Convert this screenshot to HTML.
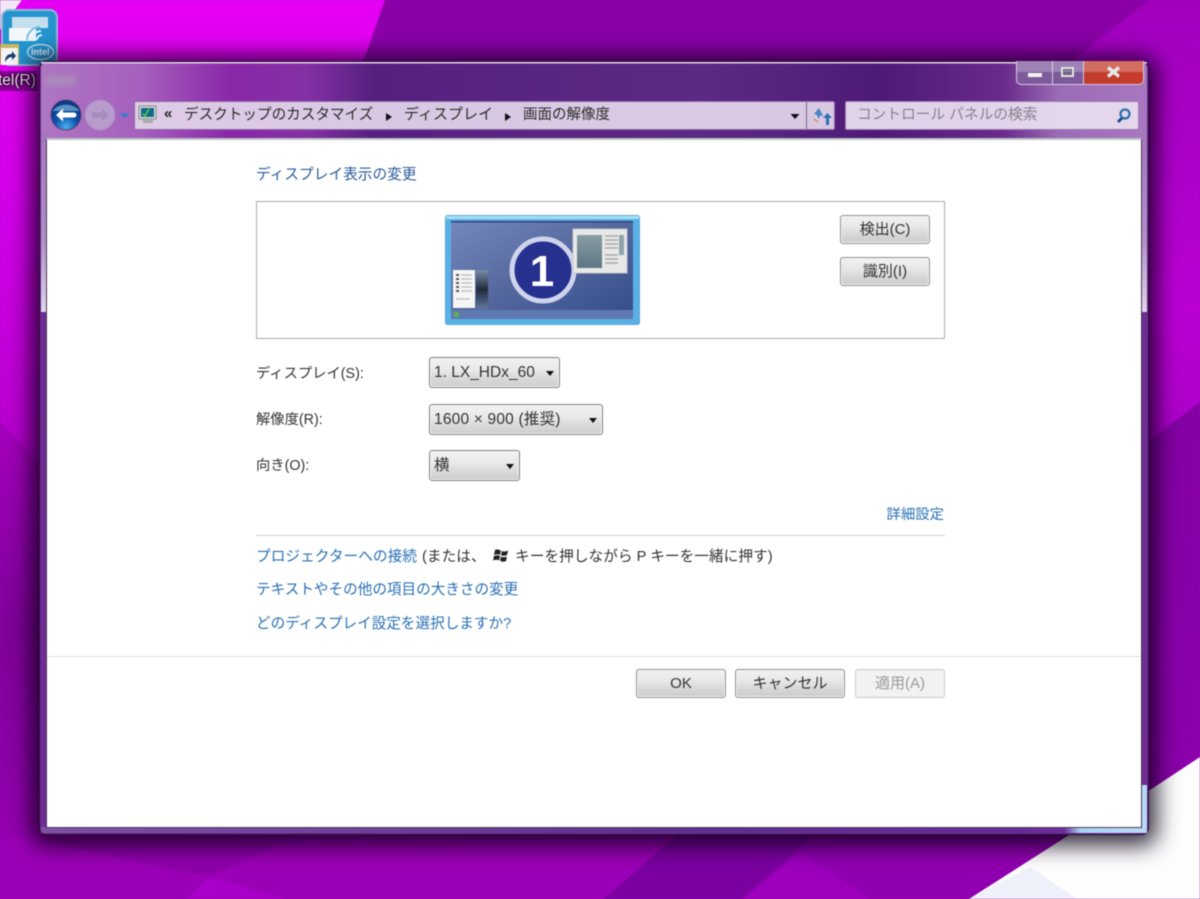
<!DOCTYPE html>
<html lang="ja"><head><meta charset="utf-8"><title>画面の解像度</title>
<style>
*{box-sizing:border-box}
html{background:#a000c0}
html,body{margin:0;padding:0;width:1200px;height:899px;overflow:hidden}
body{position:relative;font-family:"Liberation Sans","Noto Sans CJK JP",sans-serif;font-size:14px;color:#333;filter:blur(.4px)}
.a{position:absolute;white-space:nowrap}
.link{color:#2a70b4}
.btn{position:absolute;height:29px;border:1px solid #8f8f8f;border-radius:3px;background:linear-gradient(#f2f2f2 0,#e6e6e6 45%,#dcdcdc 60%,#cacaca 100%);box-shadow:inset 0 0 0 1px #f4f4f4;text-align:center;line-height:27px;color:#333;font-size:15px}
.sel{position:absolute;height:31px;border:1px solid #808080;border-radius:3px;background:linear-gradient(#f2f2f2 0,#e8e8e8 45%,#dedede 60%,#cdcdcd 100%);box-shadow:inset 0 0 0 1px #f4f4f4;line-height:29px;padding-left:4px;color:#333;font-size:15.500px;letter-spacing:.2px;white-space:nowrap}
.sel:after{content:"";position:absolute;right:5px;top:13px;border:4px solid transparent;border-top:5px solid #111;border-bottom:0}
.lab{position:absolute;white-space:nowrap;left:256px;font-size:14.300px;color:#333;line-height:20px}
</style></head><body>
<svg class="a" style="left:0;top:0" width="1200" height="899" viewBox="0 0 1200 899">
<defs>
<linearGradient id="l1" x1="0" y1="0" x2="0" y2="1"><stop offset="0" stop-color="#e600f4"/><stop offset=".5" stop-color="#d000e6"/><stop offset="1" stop-color="#b400cc"/></linearGradient>
<linearGradient id="l2" x1="0" y1="0" x2="0" y2="1"><stop offset="0" stop-color="#a400bc"/><stop offset=".5" stop-color="#7e0098"/><stop offset="1" stop-color="#9400b0"/></linearGradient>
<linearGradient id="r1" x1="0" y1="0" x2="0" y2="1"><stop offset="0" stop-color="#a000be"/><stop offset=".7" stop-color="#ba00d4"/><stop offset="1" stop-color="#ac00c8"/></linearGradient>
<linearGradient id="r2" x1="0" y1="0" x2="0" y2="1"><stop offset="0" stop-color="#8400a4"/><stop offset="1" stop-color="#8c00ac"/></linearGradient>
</defs>
<rect width="1200" height="899" fill="#9c00b8"/>
<polygon points="0,0 22,0 0,30" fill="#f4e8f8"/>
<polygon points="0,30 22,0 390,0 345,100 40,100 40,462 0,422" fill="url(#l1)"/>
<polygon points="0,422 40,462 40,840 0,840" fill="url(#l2)"/>
<polygon points="385,0 1150,0 1060,70 350,100" fill="#8a00a6"/>
<polygon points="1150,0 1200,0 1200,402 1150,440 1150,60 1060,70" fill="url(#r1)"/>
<polygon points="1150,440 1200,402 1200,757 1150,790" fill="url(#r2)"/>
<polygon points="0,840 40,835 680,835 604,899 0,899" fill="#9a00b6"/>
<polygon points="40,840 300,835 208,877" fill="#8e00aa"/>
<polygon points="208,877 188,899 285,899" fill="#a800c8"/>
<polygon points="677,835 815,835 742,899 604,899" fill="#7a00a0"/>
<polygon points="815,835 1069,835 969,899 742,899" fill="#9000b0"/>
<polygon points="800,853 870,899 742,899" fill="#9c00bc"/>
<polygon points="1069,835 1150,790 1200,757 1200,899 969,899" fill="#fdfdfe"/>
<polygon points="1030,867 1077,899 969,899" fill="#eef0fa"/>
</svg>
<!-- desktop icon -->
<div class="a" style="left:1px;top:9px;width:57px;height:57px;border-radius:8px;border:2px solid #8eb8d6;background:#2595cf"></div>
<svg class="a" style="left:0;top:10px" width="58" height="56">
<rect x="12" y="7" width="36" height="11" fill="#c6dfee"/><rect x="9" y="18" width="27" height="13" fill="#f4f8fa"/>
<path d="M27 30a13 13 0 0 1 13-13" stroke="#7cc0e2" stroke-width="2" fill="none"/>
<path d="M32 30a9 9 0 0 1 9-9M37 30a5 5 0 0 1 5-5" stroke="#e2f2fa" stroke-width="2" fill="none"/>
<ellipse cx="40.500" cy="42" rx="13" ry="7.500" fill="none" stroke="#cbe8f6" stroke-width="1.200"/>
<text x="31" y="45" font-size="9" font-family="Liberation Sans" font-weight="bold" fill="#eaf6fc">intel</text>
<rect x="0" y="34" width="19" height="21" fill="#c9b860"/>
<rect x="1" y="38" width="17" height="17" fill="#f4f4f4"/>
<path d="M5 52c0-5 2-8 7-8v-3l4 5-4 4v-3c-3 0-5 2-7 5z" fill="#123a70"/>
</svg>
<div class="a" style="left:-3px;top:71px;font-size:15.500px;color:#f4e8f4;text-shadow:0 0 3px #000,0 0 2px #000;background:rgba(60,0,70,.5);height:20px;line-height:20px;padding:0 1px">tel(R)</div>
<!-- window -->
<div class="a" style="left:39px;top:61px;width:1110px;height:774px;border-radius:7px;border:1px solid #2a1036;box-shadow:0 3px 22px 8px rgba(10,0,20,.8);background:#6e2c94"></div>
<svg class="a" style="left:40px;top:62px" width="1108" height="772" viewBox="0 0 1108 772">
<defs>
<linearGradient id="tb" x1="0" x2="1"><stop offset="0" stop-color="#ae76c2"/><stop offset=".09" stop-color="#a660be"/><stop offset=".17" stop-color="#8a28a8"/><stop offset=".24" stop-color="#8430a4"/><stop offset=".3" stop-color="#562080"/><stop offset=".6" stop-color="#5c2a84"/><stop offset=".76" stop-color="#4e1a78"/><stop offset=".87" stop-color="#6a2a8c"/><stop offset=".92" stop-color="#9a6cb4"/><stop offset="1" stop-color="#a877c0"/></linearGradient>
<linearGradient id="bot" x1="0" x2="1"><stop offset="0" stop-color="#8050a4"/><stop offset=".6" stop-color="#5e2e90"/><stop offset=".925" stop-color="#6a2c9a"/><stop offset=".94" stop-color="#a8d4f4"/><stop offset="1" stop-color="#b8dcf6"/></linearGradient>
<linearGradient id="sd" x1="0" y1="0" x2="0" y2="1"><stop offset="0" stop-color="#a575be"/><stop offset=".6" stop-color="#b090c8"/><stop offset="1" stop-color="#e0d6ea"/></linearGradient>
</defs>
<rect x="1" y="0" width="1106" height="76" rx="6" fill="url(#tb)"/>
<rect x="1" y="0" width="1106" height="1.500" fill="#e4d4ec"/>
<rect x="1" y="765" width="1106" height="6" fill="url(#bot)"/>
<rect x="1" y="70" width="6" height="180" fill="url(#sd)"/><rect x="1101" y="70" width="6" height="180" fill="url(#sd)"/>
<rect x="1101" y="723" width="6" height="45" fill="#b4daf4"/>
</svg>
<!-- blurred label behind glass -->
<div class="a" style="left:46px;top:76px;width:30px;height:10px;background:rgba(170,170,180,.45);filter:blur(3px)"></div>
<!-- content -->
<div class="a" style="left:46px;top:138px;width:1096px;height:690px;background:#fff;border:1px solid #4a3a58;border-top:2px solid #bcc4c4"></div>
<div class="a" style="left:47px;top:656px;width:1094px;height:1px;background:#dcdcdc"></div>
<!-- window buttons -->
<div class="a" style="left:1016px;top:61px;width:128px;height:24px;border:1px solid #d8c8e0;border-top:0;border-radius:0 0 5px 5px;background:linear-gradient(90deg,#7c5a9c 0,#7c5a9c 66px,#c03c2c 67px,#c83c2c 127px);overflow:hidden">
<div style="position:absolute;left:0;right:0;top:0;height:11px;background:rgba(255,255,255,.25)"></div>
<div style="position:absolute;left:35px;top:0;width:1px;height:24px;background:#d8cce0"></div>
<div style="position:absolute;left:66px;top:0;width:1px;height:24px;background:#d8cce0"></div>
<div style="position:absolute;left:11px;top:12px;width:14px;height:4px;background:#f4f4f4"></div>
<div style="position:absolute;left:44px;top:6px;width:13px;height:10px;border:2px solid #e4e4e4;box-shadow:inset 0 0 0 1px #666"></div>
</div>
<svg class="a" style="left:1101px;top:63px" width="24" height="18"><path d="M7 4.500l11 9M18 4.500l-11 9" stroke="#e8e8e8" stroke-width="3.400" fill="none"/></svg>
<!-- nav buttons -->
<svg class="a" style="left:48px;top:98px" width="88" height="36">
<defs>
<radialGradient id="blue" cx=".5" cy=".9" r=".8"><stop offset="0" stop-color="#4ab0f0"/><stop offset=".5" stop-color="#0a4ea8"/><stop offset="1" stop-color="#0a3a84"/></radialGradient>
</defs>
<circle cx="18" cy="17" r="15" fill="url(#blue)" stroke="#5c4474"/>
<path d="M5 13a14 10 0 0 1 26 0z" fill="#7ab0dc" opacity=".7"/>
<path d="M8 17l7-6.500v4h11a2 2 0 0 1 0 5H15v4z" fill="#fff"/>
<circle cx="52" cy="17" r="15" fill="#b89ccc" stroke="#a888c0"/>
<path d="M44 14.500h10v-4l7 6.500-7 6.500v-4H44z" fill="#a58cbe"/>
<path d="M71 15.500h11l-5.500 4.500z" fill="#3080c8"/>
</svg>
<!-- address bar -->
<div class="a" style="left:134px;top:101px;width:701px;height:29px;background:rgba(224,210,232,.95);border:1px solid #8d6ca6;border-radius:2px"></div>
<div class="a" style="left:806px;top:102px;width:1px;height:27px;background:#7b6a88"></div>
<svg class="a" style="left:138px;top:105px" width="20" height="20"><rect x="1" y="1" width="17" height="13" fill="#d8d8d8" stroke="#888"/><rect x="3" y="3" width="13" height="9" fill="#0f6a8c"/><path d="M5 9l2 2 4-7" stroke="#5cd040" stroke-width="1.600" fill="none"/><rect x="5" y="15" width="10" height="3" fill="#aaa"/></svg>
<div class="a" style="left:164px;top:104px;font-size:15px;font-weight:bold;color:#222;line-height:20px">«</div>
<div class="a" style="left:184px;top:105px;font-size:14.600px;color:#2c2c2c;line-height:20px">デスクトップのカスタマイズ</div>
<svg class="a" style="left:385px;top:112px" width="8" height="10"><path d="M1 1l6 4-6 4z" fill="#111"/></svg>
<div class="a" style="left:404px;top:105px;font-size:15px;color:#2c2c2c;line-height:20px">ディスプレイ</div>
<svg class="a" style="left:504px;top:112px" width="8" height="10"><path d="M1 1l6 4-6 4z" fill="#111"/></svg>
<div class="a" style="left:523px;top:105px;font-size:14.500px;color:#2c2c2c;line-height:20px">画面の解像度</div>
<svg class="a" style="left:789px;top:113px" width="12" height="8"><path d="M1.500 1h9L6 6z" fill="#111"/></svg>
<svg class="a" style="left:811px;top:105px" width="22" height="22"><path d="M8 3L3 9l2.500.8L8 14l1.200-3.500 3 .5z" fill="#4a86c4"/><path d="M15 20v-7h-3l4.500-5 4.500 5h-3v7z" fill="#2f6fb4"/><path d="M3 14l4 3" stroke="#c88a3a" stroke-width="1.200"/></svg>
<!-- search -->
<div class="a" style="left:845px;top:101px;width:294px;height:29px;background:rgba(232,220,238,.95);border:1px solid #9a7cb0;border-radius:2px"></div>
<div class="a" style="left:857px;top:105px;font-size:14.700px;color:#8a8090;line-height:20px">コントロール パネルの検索</div>
<svg class="a" style="left:1115px;top:107px" width="18" height="18"><circle cx="10" cy="7" r="4.500" fill="none" stroke="#2c70b0" stroke-width="2.200"/><path d="M7 11l-4 4" stroke="#1c4c90" stroke-width="3"/></svg>
<!-- heading -->
<div class="a" style="left:256px;top:165px;font-size:14.700px;color:#2a5a9c;line-height:20px">ディスプレイ表示の変更</div>
<div class="a" style="left:256px;top:201px;width:689px;height:138px;border:1px solid #aaa;background:#fff"></div>
<!-- monitor -->
<svg class="a" style="left:445px;top:215px" width="195" height="110" viewBox="0 0 195 110">
<defs>
<linearGradient id="mb" x1="0" y1="0" x2="1" y2="1"><stop offset="0" stop-color="#7488bc"/><stop offset=".5" stop-color="#54689e"/><stop offset="1" stop-color="#344c8c"/></linearGradient>
<linearGradient id="sw" x1="0" y1="0" x2="0" y2="1"><stop offset="0" stop-color="#8a9ca4"/><stop offset="1" stop-color="#5c7684"/></linearGradient>
<linearGradient id="gad" x1="0" y1="0" x2="0" y2="1"><stop offset="0" stop-color="#7a8ea8"/><stop offset=".5" stop-color="#1e2a3c"/><stop offset="1" stop-color="#6278a0"/></linearGradient>
</defs>
<rect x="0.500" y="0.500" width="194" height="109" rx="2" fill="#58b0e4" stroke="#58a8dc"/>
<rect x="1" y="1" width="193" height="3" fill="#a8def4"/>
<rect x="6" y="6" width="182" height="98" fill="url(#mb)"/>
<rect x="6" y="95" width="182" height="9" fill="#6078b0"/>
<rect x="6" y="6" width="182" height="1.500" fill="#2e4480"/>
<rect x="31" y="55" width="12" height="39" fill="url(#gad)"/>
<circle cx="98" cy="55" r="31" fill="#26308e" stroke="#cfd4ec" stroke-width="5"/>
<text x="97" y="71" text-anchor="middle" font-family="Liberation Sans" font-weight="bold" font-size="44" fill="#fff">1</text>
<rect x="128" y="14" width="54" height="44" fill="#e8e8e8" stroke="#c8c8c8"/>
<rect x="132" y="20" width="25" height="33" fill="url(#sw)"/>
<path d="M160 21h13M160 25h13M160 29h13M160 33h13M160 40h13M160 44h13M160 48h13" stroke="#aaa" stroke-width="1.500"/>
<rect x="174" y="20" width="5" height="20" fill="#8ea4ac"/>
<rect x="8" y="55" width="22" height="38" fill="#f6f6f6"/>
<path d="M11 60h3M11 64h3M11 68h3M11 72h3M11 76h3" stroke="#555" stroke-width="2"/>
<path d="M16 60h11M16 64h11M16 68h11M16 72h11M16 76h11M11 84h14" stroke="#bbb" stroke-width="1.200"/>
<rect x="9" y="97" width="5" height="5" fill="#5fae5c"/>
</svg>
<div class="btn" style="left:840px;top:215px;width:90px">検出(C)</div>
<div class="btn" style="left:840px;top:257px;width:90px">識別(I)</div>
<!-- form -->
<div class="lab" style="top:364px">ディスプレイ(S):</div>
<div class="sel" style="left:429px;top:357px;width:131px;letter-spacing:0">1. LX_HDx_60</div>
<div class="lab" style="top:410px">解像度(R):</div>
<div class="sel" style="left:429px;top:404px;width:174px">1600 × 900 (推奨)</div>
<div class="lab" style="top:456px">向き(O):</div>
<div class="sel" style="left:429px;top:450px;width:91px">横</div>
<div class="a link" style="right:256px;top:505px;font-size:14.400px;line-height:20px">詳細設定</div>
<div class="a" style="left:256px;top:535px;width:689px;height:1px;background:#d4d4d4"></div>
<div class="a link" style="left:256px;top:547px;font-size:14.700px;line-height:20px">プロジェクターへの接続</div>
<div class="a" style="left:422px;top:547px;font-size:14.700px;line-height:20px;color:#333">(または、</div>
<svg class="a" style="left:492px;top:547px" width="19" height="17"><path d="M3 3c3-1.500 4 0 6 .5L8 8C6 7 5 7 2 8zM10 4c2 1 4 .5 6-.5l-1 4.500c-2 1-4 1-6 0zM2 9c3-1 4-1 6 0l-1 4.500c-2-1-3-1-6 0zM9 9.500c2 1 4 1 6 0l-1 4.500c-2 1-4 1-6-.5z" fill="#222"/></svg>
<div class="a" style="left:515px;top:547px;font-size:14.700px;line-height:20px;color:#333">キーを押しながら P キーを一緒に押す)</div>
<div class="a link" style="left:256px;top:580px;font-size:14.600px;line-height:20px">テキストやその他の項目の大きさの変更</div>
<div class="a link" style="left:256px;top:614px;font-size:14.600px;line-height:20px">どのディスプレイ設定を選択しますか?</div>
<!-- footer buttons -->
<div class="btn" style="left:636px;top:669px;width:90px">OK</div>
<div class="btn" style="left:735px;top:669px;width:110px">キャンセル</div>
<div class="btn" style="left:855px;top:669px;width:90px;color:#999;border-color:#c8c8c8;background:#f2f2f2">適用(A)</div>
</body></html>
